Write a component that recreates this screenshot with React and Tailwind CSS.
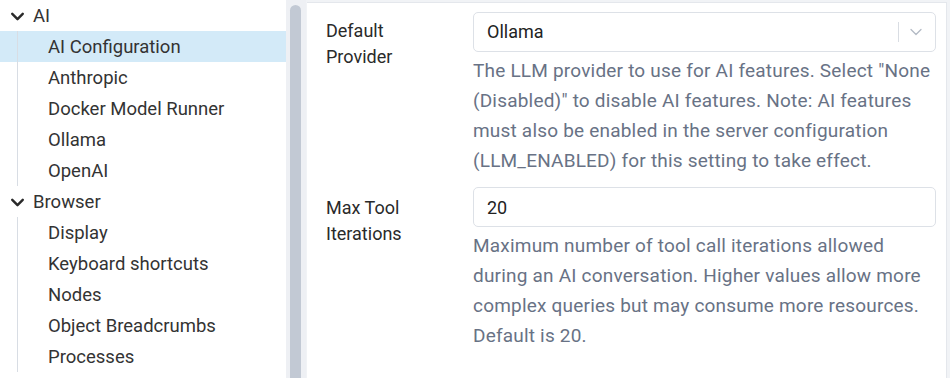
import { ChevronDown } from "lucide-react"

var groups = [
  {
    name: "AI",
    items: ["AI Configuration", "Anthropic", "Docker Model Runner", "Ollama", "OpenAI"],
  },
  {
    name: "Browser",
    items: ["Display", "Keyboard shortcuts", "Nodes", "Object Breadcrumbs", "Processes"],
  },
]

function TreeGroup(props) {
  return (
    <div>
      <div className="flex items-center h-[31px] pl-[7px] pt-[2px] text-[#333]">
        <ChevronDown size={21} strokeWidth={2.8} className="text-[#2a2a2a]" />
        <span className="ml-[5px]">{props.name}</span>
      </div>
      {props.items.map(function (item) {
        var selected = item === "AI Configuration"
        return (
          <div
            key={item}
            className={
              selected
                ? "flex h-[31px] bg-[#d3eaf8] text-[#333]"
                : "flex h-[31px] text-[#333]"
            }
          >
            <div className="w-[17px] shrink-0"></div>
            <div className="w-px shrink-0 bg-[#d8dde4]"></div>
            <div className="pl-[30px] pt-[2px] flex items-center whitespace-nowrap">{item}</div>
          </div>
        )
      })}
    </div>
  )
}

function Help(props) {
  return (
    <p className="mt-[4px] text-[#687285] text-[19px] leading-[30px] tracking-[0.2px]">
      {props.lines.map(function (line, i) {
        return (
          <span key={i} className="block whitespace-nowrap">{line}</span>
        )
      })}
    </p>
  )
}

export default function App() {
  return (
    <div
      className="w-[950px] h-[378px] overflow-hidden flex bg-white text-[18px]"
      style={{ fontFamily: "Roboto, 'Noto Sans', sans-serif" }}
    >
      {/* Tree */}
      <div className="w-[286px] shrink-0 text-[18.5px]">
        {groups.map(function (g) {
          return <TreeGroup key={g.name} name={g.name} items={g.items} />
        })}
      </div>

      {/* Scrollbar */}
      <div className="w-[20px] shrink-0 bg-[#eef0f4] pl-[4px] pt-[5px]">
        <div className="w-[11px] h-full rounded-t-full bg-[#c2c9d4]"></div>
      </div>

      {/* Form */}
      <div className="flex-1 bg-[#f1f3f6] pt-[2px] pl-[1px] pr-[3px]">
        <div className="h-full bg-white border-t border-r border-[#e4e7ec] pl-[19px] pr-[10px] pt-[9px]">
          <div className="flex">
            <div className="w-[147px] shrink-0 pt-[6px] leading-[26px] text-[#2a2a2a]">
              Default
              <br />
              Provider
            </div>
            <div className="flex-1">
              <div className="h-[40px] rounded-[5px] border border-[#dde1e7] flex items-center pl-[13px] pr-[9px] text-[#222]">
                <span className="flex-1 -mt-[2px]">Ollama</span>
                <div className="w-px h-[20px] bg-[#d9dde3]"></div>
                <ChevronDown size={20} strokeWidth={1.5} className="ml-[7px] text-[#b3bac5]" />
              </div>
              <Help
                lines={[
                  "The LLM provider to use for AI features. Select \"None",
                  "(Disabled)\" to disable AI features. Note: AI features",
                  "must also be enabled in the server configuration",
                  "(LLM_ENABLED) for this setting to take effect.",
                ]}
              />
            </div>
          </div>

          <div className="flex mt-[11px]">
            <div className="w-[147px] shrink-0 pt-[8px] leading-[26px] text-[#2a2a2a]">
              Max Tool
              <br />
              Iterations
            </div>
            <div className="flex-1">
              <div className="h-[40px] rounded-[5px] border border-[#dde1e7] flex items-center pl-[13px] text-[#222]">
                20
              </div>
              <Help
                lines={[
                  "Maximum number of tool call iterations allowed",
                  "during an AI conversation. Higher values allow more",
                  "complex queries but may consume more resources.",
                  "Default is 20.",
                ]}
              />
            </div>
          </div>
        </div>
      </div>
    </div>
  )
}
